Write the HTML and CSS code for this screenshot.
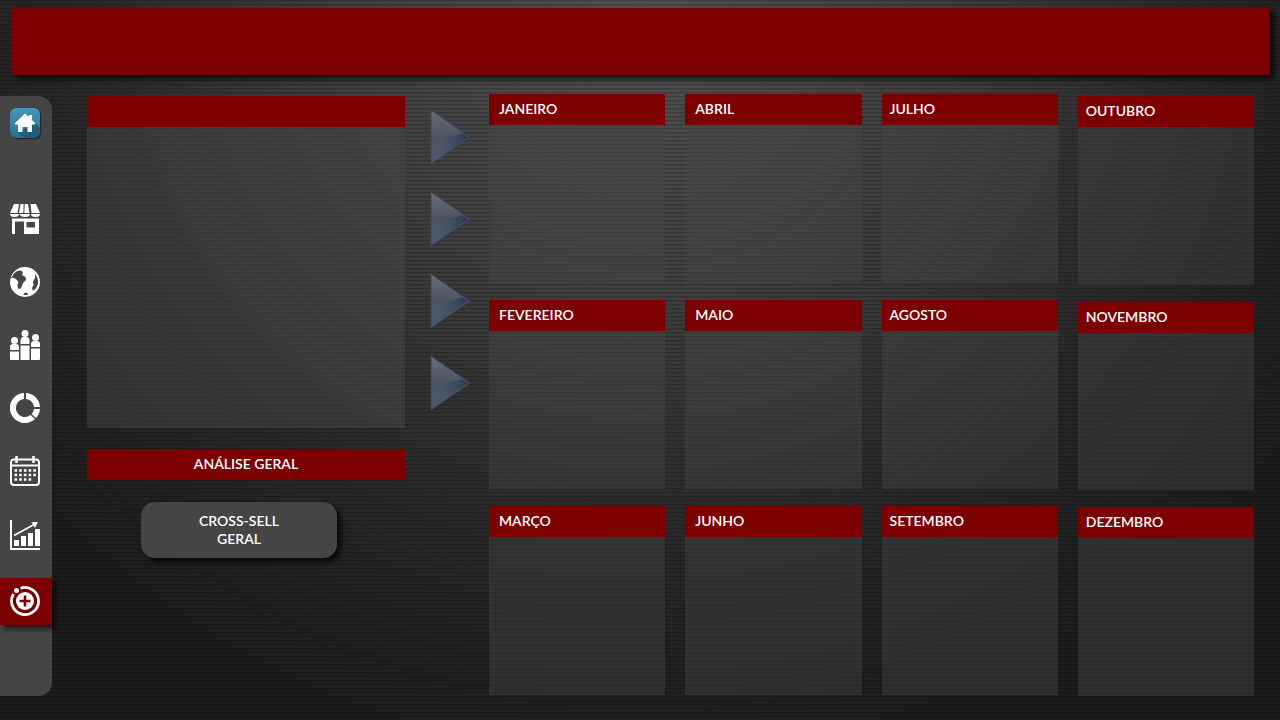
FILE: index.html
```html
<!DOCTYPE html>
<html lang="pt-BR">
<head>
<meta charset="utf-8">
<title>Análise Geral</title>
<link rel="stylesheet" href="styles.css">
</head>
<body>
<header class="banner"></header>
<div class="layout">
  <nav class="sidebar" aria-label="Menu">
    <a class="nav-link home" href="#" aria-label="Início">
      <svg class="icon home-icon" viewBox="0 0 30 30"><defs><linearGradient id="hg" x2="0" y2="1"><stop stop-color="#4796b8"/><stop offset="1" stop-color="#286f91"/></linearGradient></defs><rect width="30" height="30" rx="6" fill="url(#hg)"/><path d="M25 15l5 5v4q0 6-6 6H14l-6-6z" fill="#1d5874" opacity=".75"/><path d="M15 5.500l4 3.500V7h3v5l3.500 3.500-1 1H22V24h-4.500v-5h-5v5H8v-7.500H5.500l-1-1z" fill="#fff"/></svg>
    </a>
    <a class="nav-link" href="#" aria-label="Loja">
      <svg class="icon" viewBox="0 0 30 30" fill="#fff"><path d="M4 0h5L7.500 9H0zM10.500 0H18l1.500 9h-10.500zM20.500 0H26l4 9h-8.500zM0 10h9q0 3-4.500 3Q0 13 0 10zM9.500 10h10.500q0 3-5 3t-5.500-3zM21 10h9q0 3-4.500 3T21 10z"/><path d="M14.200 0l-.4 9" stroke="#454545"/><path fill-rule="evenodd" d="M2 14.500h27V30H14V17.500H5V30H2zM16.500 18v5.500H25V18z"/></svg>
    </a>
    <a class="nav-link" href="#" aria-label="Mundo">
      <svg class="icon" viewBox="0 0 30 30"><circle cx="15" cy="15" r="15" fill="#fff"/><path d="M4 6.500Q7 3 11 3.500l2 2-1 2.500 3.500 2 .5 3-3 3-1.500 4-1.500 2-2-.5-.5-3.500 1-3-2.500-3-3.500-1.500-3 2Q3 8.500 4 6.500zM25 7q4 5 3 10-1 4-5 7l-1-3 1.500-3-.5-3.500 2-3.500zM13.500 27l2-1.500 2.500 1-.5 1.500h-4z" fill="#454545"/></svg>
    </a>
    <a class="nav-link" href="#" aria-label="Clientes">
      <svg class="icon" viewBox="0 0 30 30" fill="#fff"><circle cx="4.500" cy="10.500" r="3.500"/><circle cx="15" cy="3.500" r="3.500"/><circle cx="25.500" cy="7.500" r="3.500"/><path d="M0 20v-3q0-3 3-3h3q3 0 3 3v3zM10.500 14v-3q0-4 3-4h3q3 0 3 4v3zM21 17v-3q0-3 3-3h3q3 0 3 3v3zM0 21.500h9V30H1q-1 0-1-1zM10.500 15.500h9V30h-9zM21 18.500h9V29q0 1-1 1h-8z"/></svg>
    </a>
    <a class="nav-link" href="#" aria-label="Indicadores">
      <svg class="icon" viewBox="0 0 30 30" fill="#fff"><path d="M14 0v6a9 9 0 1 0 6.500 16l4.500 4A15 15 0 1 1 14 0zM16 0a15 15 0 0 1 14 14h-6a9 9 0 0 0-8-8zM24 16h6a15 15 0 0 1-4 9l-4.500-4a9 9 0 0 0 2.500-5z"/></svg>
    </a>
    <a class="nav-link" href="#" aria-label="Calendário">
      <svg class="icon" viewBox="0 0 30 30"><g fill="none" stroke="#fff" stroke-width="2"><rect x="1" y="3.500" width="28" height="25.500" rx="3"/><path d="M1 9.500h28"/><path d="M6.500 0v7M23.500 0v7" stroke-width="2.500"/><path d="M4.500 14.500h22M4.500 19h22M4.500 23.500h17" stroke-width="2.600" stroke-dasharray="2.600 2.100"/></g></svg>
    </a>
    <a class="nav-link growth" href="#" aria-label="Crescimento">
      <svg class="icon" viewBox="0 0 30 30"><path d="M1 0v29h29" fill="none" stroke="#fff" stroke-width="2"/><path d="M4 20h5v6H4zM11 16h5v10h-5zM18 13h5v13h-5zM25 9h5v17h-5z" fill="#fff"/><path d="M4 15.500L25 4" fill="none" stroke="#fff" stroke-width="1.600"/><path d="M21.500 2H28l-3 6z" fill="#fff"/></svg>
    </a>
    <a class="nav-link active" href="#" aria-label="Cross-sell" aria-current="page">
      <svg class="icon" viewBox="0 0 30 30"><path d="M10.500 2.300A13.500 13.500 0 1 1 3.500 8" fill="none" stroke="#fff" stroke-width="2.800"/><circle cx="6.500" cy="4.500" r="2.500" fill="#fff"/><circle cx="15" cy="15" r="9" fill="#fff"/><path d="M15 9.500v11M9.500 15h11" stroke="#7c0000" stroke-width="2.600"/></svg>
    </a>
  </nav>
  <main class="content">
    <section class="overview">
      <div class="panel"><div class="bar"></div></div>
      <h1 class="bar title">ANÁLISE GERAL</h1>
      <button class="action" type="button">CROSS-SELL<br>GERAL</button>
    </section>
    <div class="arrows" aria-hidden="true">
      <svg class="arrow" viewBox="0 0 42 56"><defs><linearGradient id="ag" x2="0" y2="1"><stop stop-color="#687077"/><stop offset=".5" stop-color="#4a5461"/><stop offset="1" stop-color="#4d5b6e"/></linearGradient><linearGradient id="ad"><stop stop-color="#4f5d70" stop-opacity="0"/><stop offset="1" stop-color="#27354e"/></linearGradient></defs><path d="M2 1L41 28 2 55z" fill="url(#ag)" stroke="#34455f"/><path d="M3 29Q22 29 33 24l6 4L3 53z" fill="url(#ad)"/></svg>
      <svg class="arrow" viewBox="0 0 42 56"><path d="M2 1L41 28 2 55z" fill="url(#ag)" stroke="#34455f"/><path d="M3 29Q22 29 33 24l6 4L3 53z" fill="url(#ad)"/></svg>
      <svg class="arrow" viewBox="0 0 42 56"><path d="M2 1L41 28 2 55z" fill="url(#ag)" stroke="#34455f"/><path d="M3 29Q22 29 33 24l6 4L3 53z" fill="url(#ad)"/></svg>
      <svg class="arrow" viewBox="0 0 42 56"><path d="M2 1L41 28 2 55z" fill="url(#ag)" stroke="#34455f"/><path d="M3 29Q22 29 33 24l6 4L3 53z" fill="url(#ad)"/></svg>
    </div>
    <div class="months">
      <div class="quarter">
        <section class="month"><h2 class="bar">JANEIRO</h2></section>
        <section class="month"><h2 class="bar">FEVEREIRO</h2></section>
        <section class="month"><h2 class="bar">MARÇO</h2></section>
      </div>
      <div class="quarter">
        <section class="month"><h2 class="bar">ABRIL</h2></section>
        <section class="month"><h2 class="bar">MAIO</h2></section>
        <section class="month"><h2 class="bar">JUNHO</h2></section>
      </div>
      <div class="quarter third">
        <section class="month"><h2 class="bar">JULHO</h2></section>
        <section class="month"><h2 class="bar">AGOSTO</h2></section>
        <section class="month"><h2 class="bar">SETEMBRO</h2></section>
      </div>
      <div class="quarter last">
        <section class="month"><h2 class="bar">OUTUBRO</h2></section>
        <section class="month"><h2 class="bar">NOVEMBRO</h2></section>
        <section class="month"><h2 class="bar">DEZEMBRO</h2></section>
      </div>
    </div>
  </main>
</div>
</body>
</html>
```

FILE: styles.css
```css
* { box-sizing: border-box; }
body {
  margin: 0;
  min-height: 100vh;
  display: flex;
  flex-direction: column;
  padding: 8px 0 24px;
  color: #fff;
  font: 600 14px/18px Lato, "Open Sans", sans-serif;
  background:
    repeating-linear-gradient(rgba(0,0,0,.22) 0 1px, rgba(0,0,0,.08) 1px 2px, transparent 2px 4px),
    radial-gradient(ellipse 62% 105% at 50% 0, #525252 0%, #3f3e3f 40%, #282627 75%, #1e1c1c 100%);
}
.banner {
  height: 67px;
  margin: 0 10px 0 12px;
  background: #7c0000;
  box-shadow: 4px 4px 6px rgba(0,0,0,.75);
}
.layout { flex: 1; display: flex; padding-top: 19px; }
.sidebar {
  width: 52px;
  margin-top: 2px;
  display: flex;
  flex-direction: column;
  align-items: center;
  padding-top: 12px;
  border-radius: 0 14px 14px 0;
  background: #454545;
}
.nav-link { display: flex; justify-content: center; width: 100%; margin-bottom: 33px; padding-right: 2px; }
.home { margin-bottom: 66px; }
.growth { padding-top: 1px; }
.icon { display: block; width: 30px; height: 30px; }
.home-icon { border-radius: 6px; box-shadow: 1px 1px 1px #222; }
.active { margin-top: -5px; padding: 8px 2px 9px 0; background: #7c0000; box-shadow: 4px 4px 5px rgba(0,0,0,.65); }
.content {
  flex: 1;
  display: grid;
  grid-template-columns: 318fr 84fr 765fr;
  padding: 0 26px 0 35px;
}
.bar {
  min-height: 31px;
  margin: 0;
  padding: 6px 10px;
  background: #7c0000;
  font-size: 14px;
  line-height: 18px;
  font-weight: 600;
}
.overview { display: flex; flex-direction: column; padding-top: 2px; }
.panel { height: 332px; background: rgba(72,72,72,.5); }
.title { margin-top: 21px; text-align: center; }
.action {
  align-self: center;
  width: 196px;
  height: 56px;
  margin: 22px 14px 0 0;
  border: 0;
  border-radius: 14px;
  background: #454545;
  color: inherit;
  font: inherit;
  box-shadow: 4px 4px 5px rgba(0,0,0,.7);
}
.arrows { display: flex; flex-direction: column; gap: 26px; padding: 15px 0 0 24px; }
.arrow { width: 42px; height: 56px; }
.months { display: grid; grid-template-columns: repeat(4, 1fr); column-gap: 20px; }
.quarter { display: flex; flex-direction: column; gap: 17px; padding-bottom: 1px; }
.month { flex: 1; background: rgba(72,72,72,.42); }
.third .bar { padding-left: 8px; }
.last { padding: 2px 0 0; }
.last .bar { padding-left: 8px; }
```
